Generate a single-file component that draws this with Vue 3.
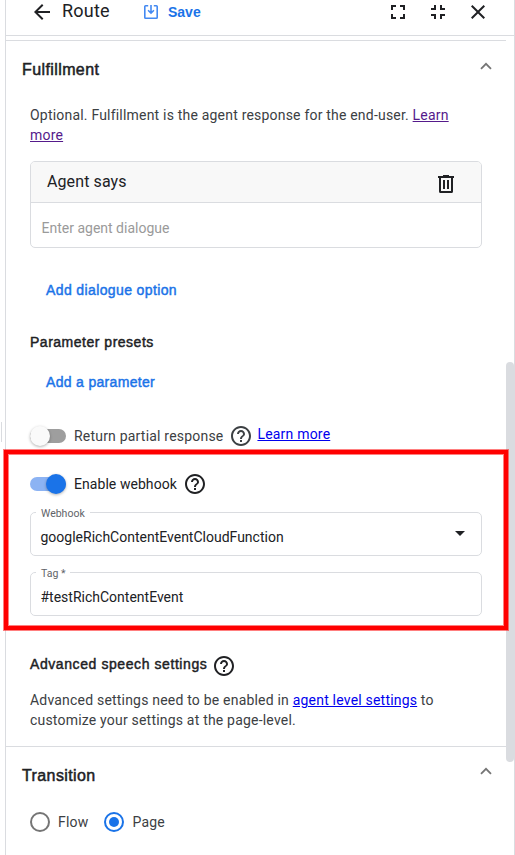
<script setup>
import { ref } from 'vue'

const partial = ref(false)
const webhook = ref(true)
const target = ref('Page')
const helpPath =
  'M11 18h2v-2h-2v2zm1-16C6.48 2 2 6.48 2 12s4.48 10 10 10 10-4.48 10-10S17.52 2 12 2zm0 18c-4.41 0-8-3.59-8-8s3.59-8 8-8 8 3.59 8 8-3.59 8-8 8zm0-14c-2.21 0-4 1.79-4 4h2c0-1.1.9-2 2-2s2 .9 2 2c0 2-3 1.75-3 5h2c0-2.25 3-2.5 3-5 0-2.21-1.79-4-4-4z'
</script>

<template>
  <div class="page">
    <div class="panel">
      <header class="bar">
        <svg class="i24" viewBox="0 0 24 24"><path d="M20 11H7.83l5.59-5.59L12 4l-8 8 8 8 1.41-1.41L7.83 13H20v-2z" /></svg>
        <h1>Route</h1>
        <button class="save">
          <svg viewBox="0 0 16 16" fill="none" stroke="currentColor" stroke-width="1.6">
            <path d="M5.200 1.800H2.600Q1.800 1.800 1.800 2.600v10.800q0 .8.8.8h10.800q.8 0 .8-.8V2.600q0-.8-.8-.8H10.800M8 1v8M5.100 6.300 8 9.200l2.900-2.900" />
          </svg>
          <span>Save</span>
        </button>
        <div class="tools">
          <svg class="i24" viewBox="0 0 24 24"><path d="M7 14H5v5h5v-2H7v-3zm-2-4h2V7h3V5H5v5zm12 7h-3v2h5v-5h-2v3zM14 5v2h3v3h2V5h-5z" /></svg>
          <svg class="i24" viewBox="0 0 24 24"><path d="M5 16h3v3h2v-5H5v2zm3-8H5v2h5V5H8v3zm6 11h2v-3h3v-2h-5v5zm2-11V5h-2v5h5V8h-3z" /></svg>
          <svg class="i24" viewBox="0 0 24 24"><path d="M19 6.41 17.59 5 12 10.59 6.41 5 5 6.41 10.59 12 5 17.59 6.41 19 12 13.41 17.59 19 19 17.59 13.41 12z" /></svg>
        </div>
      </header>

      <main class="content">
        <section class="fulfillment">
          <div class="head">
            <h2>Fulfillment</h2>
            <svg class="chev" viewBox="0 0 12 8"><path d="M1 6.8 6 1.8l5 5" /></svg>
          </div>
          <p class="desc">Optional. Fulfillment is the agent response for the end-user. <a class="visited">Learn<br />more</a></p>

          <div class="card">
            <div class="card-head">
              <span>Agent says</span>
              <svg class="trash" viewBox="0 0 16 18"><path fill-rule="evenodd" d="M5 0h6v1h5v2h-1v13.5q0 1.5-1.5 1.5h-11Q1 18 1 16.500V3H0V1h5zM3 3v13h10V3zM5 5h2v9H5zM9 5h2v9H9z" /></svg>
            </div>
            <div class="card-body">Enter agent dialogue</div>
          </div>

          <button class="add option">Add dialogue option</button>
          <h3 class="presets">Parameter presets</h3>
          <button class="add param">Add a parameter</button>

          <div class="toggle-row partial">
            <span class="switch" :class="{ on: partial }" @click="partial = !partial"><i></i></span>
            <span class="label">Return partial response</span>
            <svg class="help" viewBox="0 0 24 24"><path :d="helpPath" /></svg>
            <a class="link">Learn more</a>
          </div>

          <div class="toggle-row hook">
            <span class="switch" :class="{ on: webhook }" @click="webhook = !webhook"><i></i></span>
            <span class="label">Enable webhook</span>
            <svg class="help" viewBox="0 0 24 24"><path :d="helpPath" /></svg>
          </div>

          <fieldset class="field">
            <legend>Webhook</legend>
            <span class="value">googleRichContentEventCloudFunction</span>
            <i class="caret"></i>
          </fieldset>
          <fieldset class="field">
            <legend>Tag *</legend>
            <span class="value">#testRichContentEvent</span>
          </fieldset>

          <div class="speech">
            <h3>Advanced speech settings</h3>
            <svg class="help" viewBox="0 0 24 24"><path :d="helpPath" /></svg>
          </div>
          <p class="desc adv">Advanced settings need to be enabled in <a class="link">agent level settings</a> to<br />customize your settings at the page-level.</p>
        </section>

        <section class="transition">
          <div class="head">
            <h2>Transition</h2>
            <svg class="chev" viewBox="0 0 12 8"><path d="M1 6.8 6 1.8l5 5" /></svg>
          </div>
          <div class="radios">
            <label v-for="name in ['Flow', 'Page']" :key="name" @click="target = name">
              <span class="radio" :class="{ on: target === name }"></span>{{ name }}
            </label>
          </div>
        </section>
      </main>
    </div>
    <div class="handle"></div>
    <div class="thumb"></div>
    <div class="highlight"></div>
  </div>
</template>

<style>
body { margin: 0; background: #fff; overflow: hidden; }
</style>

<style scoped>
* { box-sizing: border-box; }
.page { position: relative; width: 515px; height: 855px; overflow: hidden; font: 14px/20px Roboto, sans-serif; color: #3c4043; }
svg { display: block; flex: none; fill: currentColor; }
h1, h2, h3, p { margin: 0; font-weight: 400; }
button { border: 0; padding: 0; background: none; display: block; }
.panel { margin-left: 5px; width: 510px; height: 855px; border: solid #dadce0; border-width: 0 1px; }
.bar { height: 36px; border-bottom: 1px solid #dadce0; display: flex; align-items: center; padding: 0 24px 12px; color: #202124; }
.i24 { width: 24px; height: 24px; }
h1 { margin: 0 0 2px 8px; width: 81px; font-size: 18px; line-height: 24px; letter-spacing: .2px; }
.save { display: flex; align-items: center; gap: 9px; color: #1a73e8; font: bold 14px/20px "Liberation Sans", sans-serif; }
.save svg { width: 16px; height: 16px; fill: none; color: #4389f2; }
.tools { margin-left: auto; display: flex; gap: 16px; }
.content { width: 500px; margin-top: 4px; border-top: 1px solid #dadce0; }
.head { display: flex; justify-content: space-between; padding: 19px 14px 0 16px; height: 64px; }
h2 { font: 16px/20px "Liberation Sans", sans-serif; letter-spacing: .4px; color: #202124; -webkit-text-stroke: .5px; }
h3, .add { font: 14px/20px "Liberation Sans", sans-serif; letter-spacing: .38px; color: #202124; -webkit-text-stroke: .45px; }
.chev { width: 12px; height: 8px; margin-top: 2px; fill: none; stroke: #757575; stroke-width: 1.8; }
.desc { padding-left: 24px; letter-spacing: .2px; white-space: nowrap; }
a { text-decoration: underline; }
.visited { color: #551a8b; }
.link { color: #0000ee; }
.card { margin: 16px 24px 0; height: 87px; border: 1px solid #dadce0; border-radius: 5px; overflow: hidden; }
.card-head { height: 41px; background: #f8f8f8; border-bottom: 1px solid #dadce0; display: flex; justify-content: space-between; align-items: center; padding: 0 27px 0 16px; font-size: 16px; letter-spacing: .1px; color: #202124; }
.trash { width: 16px; height: 18px; margin-top: 4px; }
.card-body { padding: 15px 10.5px; color: #9a9a9a; }
.add { color: #1a73e8; margin-left: 40px; }
.option { margin-top: 32px; }
.presets { margin: 32px 0 0 24px; letter-spacing: .51px; }
.param { margin-top: 20px; letter-spacing: .32px; }
.toggle-row { display: flex; align-items: center; height: 24px; padding-left: 24px; }
.partial { margin-top: 32px; }
.hook { margin-top: 24px; color: #202124; }
.switch { position: relative; width: 36px; height: 14px; border-radius: 7px; background: #9e9e9e; }
.switch i { position: absolute; left: 0; top: -3px; width: 20px; height: 20px; border-radius: 50%; background: #fafafa; box-shadow: 0 1px 3px rgba(0, 0, 0, .3); }
.switch.on { background: #8cb3f3; }
.switch.on i { left: 16px; background: #1a73e8; }
.label { margin-left: 8px; letter-spacing: .2px; }
.hook .label { letter-spacing: .06px; }
.help { width: 24px; height: 24px; margin-left: 6px; }
.toggle-row .link { margin: -4px 0 0 4px; letter-spacing: .2px; }
.field { min-width: 0; height: 49px; margin: 11px 24px 0; padding: 1px 16px 0 9.5px; border: 1px solid #dadce0; border-radius: 5px; display: flex; align-items: center; justify-content: space-between; color: #202124; }
.field legend { margin-left: -4.5px; padding: 3px 5px 0; font-size: 10.5px; line-height: 7px; color: #5f6368; }
.caret { border: 5px solid transparent; border-top-color: #202124; border-bottom: 0; margin-top: -7px; }
.speech { display: flex; align-items: center; height: 24px; margin-top: 38px; padding-left: 24px; color: #202124; }
.speech h3 { margin-top: -4px; letter-spacing: .58px; }
.speech .help { margin-left: 5px; }
.adv { margin-top: 12px; height: 56px; }
.transition { border-top: 1px solid #dadce0; }
.transition .head { height: 65px; }
.transition .chev { margin-top: 1px; }
.radios { display: flex; gap: 16px; padding-left: 24px; }
.radios label { display: flex; align-items: center; gap: 8px; letter-spacing: .2px; }
.radio { width: 20px; height: 20px; border: 2px solid #757575; border-radius: 50%; display: grid; place-items: center; }
.radio.on { border-color: #1a73e8; }
.radio.on::after { content: ""; width: 10px; height: 10px; border-radius: 50%; background: #1a73e8; }
.handle { position: absolute; left: 1px; top: 422px; width: 1px; height: 20px; background: #dadce0; }
.thumb { position: absolute; left: 506px; top: 362px; width: 8px; height: 400px; border-radius: 4px; background: #dadce0; }
.highlight { position: absolute; left: 4px; top: 450px; width: 504px; height: 180px; border: 4px solid #f00; box-shadow: 0 0 0 1px rgba(255, 0, 0, .5), inset 0 0 0 1px rgba(255, 0, 0, .5); }
</style>
